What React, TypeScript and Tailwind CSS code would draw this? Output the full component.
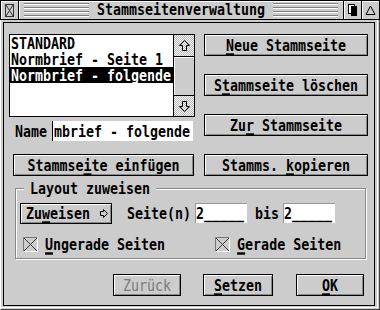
import type { ReactNode } from 'react';

const font = "font-['DejaVu_Sans_Mono','Liberation_Mono',monospace] text-[13.3px] font-bold leading-[16px] text-black";
const bevel = 'border border-black bg-[#cccccc] shadow-[inset_1px_1px_0_#ffffff,inset_-1px_-1px_0_#888888]';
const dither = 'bg-[conic-gradient(#ffffff_25%,#b4b4b4_0_50%,#ffffff_0_75%,#b4b4b4_0)] bg-[length:2px_2px]';

function T({ children, className = '' }: { children: ReactNode; className?: string }) {
  return <span className={`inline-block leading-[13px] scale-y-[1.2] whitespace-pre ${className}`}>{children}</span>;
}

function K({ children }: { children: ReactNode }) {
  return <span className="underline decoration-[1.5px] underline-offset-[2px]">{children}</span>;
}

function Btn({ w, children, disabled = false }: { w: string; children: ReactNode; disabled?: boolean }) {
  return (
    <div className={`${w} h-[22px] flex items-center justify-center ${bevel}`}>
      <T className={disabled ? 'text-[#7a7a7a] font-normal' : ''}>{children}</T>
    </div>
  );
}

function Check({ label }: { label: ReactNode }) {
  return (
    <>
      <svg width="15" height="15" viewBox="0 0 15 15">
        <path d="M0.5 14.5V0.5H14.5" fill="none" stroke="#777777" />
        <path d="M14.5 0.5V14.5H0.5" fill="none" stroke="#ffffff" />
        <path d="M1 1L14 14M14 1L1 14" stroke="#3a3a3a" />
      </svg>
      <T className="ml-[7px]">{label}</T>
    </>
  );
}

function ArrowUp({ down = false }: { down?: boolean }) {
  return (
    <svg width="11" height="11" viewBox="0 0 11 11" className={down ? 'rotate-180' : ''}>
      <path d="M5.5 0.5L10.5 5.5H7.5V10.5H3.5V5.5H0.5Z" fill="none" stroke="#000000" />
    </svg>
  );
}

export default function App() {
  return (
    <div className={`w-[380px] h-[310px] bg-[#cccccc] flex flex-col overflow-hidden ${font}`}>
      {/* Titelzeile */}
      <div className="h-[20px] flex border border-black">
        <div className="w-[18px] border-r border-black flex items-center justify-center shadow-[inset_1px_1px_0_#ffffff]">
          <svg width="9" height="13" viewBox="0 0 9 13">
            <rect x="0.5" y="0.5" width="8" height="12" fill="none" stroke="#333333" />
            <path d="M1 1L8 12M8 1L1 12" stroke="#333333" />
          </svg>
        </div>
        <div className="flex-1 flex items-center px-[5px] shadow-[inset_1px_1px_0_#ffffff]">
          <div className="flex-1 h-[14px] bg-[repeating-linear-gradient(to_bottom,#808080_0px,#808080_1px,#ffffff_1px,#ffffff_2px,#cccccc_2px,#cccccc_4px)]" />
          <div className="px-[8px]">
            <T>Stammseitenverwaltung</T>
          </div>
          <div className="flex-1 h-[14px] bg-[repeating-linear-gradient(to_bottom,#808080_0px,#808080_1px,#ffffff_1px,#ffffff_2px,#cccccc_2px,#cccccc_4px)]" />
        </div>
        <div className="w-[18px] border-l border-black flex items-center justify-center shadow-[inset_1px_1px_0_#ffffff]">
          <svg width="10" height="12" viewBox="0 0 10 12">
            <rect x="0.5" y="0.5" width="6" height="9" fill="#ffffff" stroke="#000000" />
            <rect x="3" y="2" width="6" height="10" fill="#000000" />
          </svg>
        </div>
        <div className="w-[18px] border-l border-black flex items-center justify-center shadow-[inset_1px_1px_0_#ffffff]">
          <svg width="11" height="10" viewBox="0 0 11 10">
            <path d="M5.5 1L10 9.5H1Z" fill="none" stroke="#000000" />
          </svg>
        </div>
      </div>

      {/* Fensterinhalt */}
      <div className="flex-1 flex border-l border-l-white border-r border-r-[#404040] border-b border-b-[#404040]">
        <div className="flex-1 mr-[1px] mb-[1px] flex items-start border-r border-b border-white">
          <div className="ml-[2px] mt-[2px] w-[372px] h-[284px] border border-black flex flex-col pt-[11px]">
            <div className="flex items-start">
              {/* linke Spalte */}
              <div className="ml-[5px] w-[186px] flex flex-col">
                <div className="h-[83px] border border-black bg-white flex">
                  <div className="flex-1 flex flex-col">
                    <div className="h-[16px] pl-[1px] flex items-center"><T>STANDARD</T></div>
                    <div className="h-[16px] pl-[1px] flex items-center"><T>Normbrief - Seite 1</T></div>
                    <div className="h-[16px] pl-[1px] flex items-center bg-black text-white"><T>Normbrief - folgende</T></div>
                  </div>
                  <div className="w-[21px] border-l border-black flex flex-col">
                    <div className={`h-[22px] border-b border-black flex items-center justify-center ${dither}`}>
                      <ArrowUp />
                    </div>
                    <div className="h-[39px] border-b border-black bg-[#cccccc] shadow-[inset_1px_1px_0_#ffffff]" />
                    <div className={`flex-1 flex items-center justify-center ${dither}`}>
                      <ArrowUp down />
                    </div>
                  </div>
                </div>
                <div className="mt-[4px] h-[20px] flex items-center">
                  <T className="ml-[6px]">Name</T>
                  <div className="ml-[5px] w-[141px] h-[20px] bg-white border-l border-black overflow-hidden flex items-center pl-[1px]">
                    <T>mbrief - folgende</T>
                  </div>
                </div>
                <div className="mt-[13px] ml-[4px]">
                  <Btn w="w-[181px]">
                    Stammse<K>i</K>te einfügen
                  </Btn>
                </div>
              </div>

              {/* rechte Spalte */}
              <div className="ml-[9px] flex flex-col gap-[18px]">
                <Btn w="w-[164px]">
                  <K>N</K>eue Stammseite
                </Btn>
                <Btn w="w-[164px]">
                  S<K>t</K>ammseite löschen
                </Btn>
                <Btn w="w-[164px]">
                  Zu<K>r</K> Stammseite
                </Btn>
                <Btn w="w-[164px]">
                  Stamms. <K>k</K>opieren
                </Btn>
              </div>
            </div>

            {/* Layout zuweisen */}
            <div className="relative mt-[12px] ml-[11px] w-[351px] h-[71px] border border-[#888888] shadow-[1px_1px_0_#ffffff,inset_1px_1px_0_#ffffff] pt-[14px]">
              <div className="absolute left-[8px] top-[-9px] h-[16px] flex items-center px-[6px] bg-[#cccccc]">
                <T>Layout zuweisen</T>
              </div>
              <div className="flex items-start">
                <div className={`ml-[4px] w-[92px] h-[21px] flex items-center pl-[5px] ${bevel}`}>
                  <T>
                    Zu<K>w</K>eisen
                  </T>
                  <svg width="8" height="9" viewBox="0 0 8 9" className="ml-[10px]">
                    <path d="M0.5 2.5H3.5V0.5L7.5 4.5L3.5 8.5V6.5H0.5Z" fill="none" stroke="#000000" />
                  </svg>
                </div>
                <div className="ml-[15px] h-[21px] flex items-center">
                  <T>Seite(n)</T>
                </div>
                <div className="ml-[4px] w-[52px] h-[20px] bg-white flex items-center pl-[1px] shadow-[inset_1px_1px_0_#999999]">
                  <T>2_____</T>
                </div>
                <div className="ml-[8px] h-[21px] flex items-center">
                  <T>bis</T>
                </div>
                <div className="ml-[4px] w-[52px] h-[20px] bg-white flex items-center pl-[1px] shadow-[inset_1px_1px_0_#999999]">
                  <T>2_____</T>
                </div>
              </div>
              <div className="mt-[13px] h-[15px] flex items-center">
                <div className="ml-[7px] flex items-center">
                  <Check label={<><K>U</K>ngerade Seiten</>} />
                </div>
                <div className="ml-[50px] flex items-center">
                  <Check label={<><K>G</K>erade Seiten</>} />
                </div>
              </div>
            </div>

            {/* Knöpfe unten */}
            <div className="mt-[15px] flex">
              <div className="ml-[109px]">
                <Btn w="w-[68px]" disabled>
                  Zurück
                </Btn>
              </div>
              <div className="ml-[22px]">
                <Btn w="w-[70px]">
                  <K>S</K>etzen
                </Btn>
              </div>
              <div className="ml-[23px]">
                <Btn w="w-[68px]">
                  <K>O</K>K
                </Btn>
              </div>
            </div>
          </div>
        </div>
      </div>
    </div>
  );
}
